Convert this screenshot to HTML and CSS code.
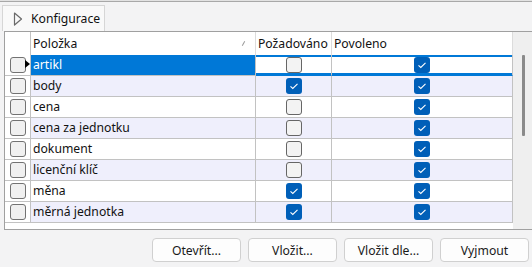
FILE: index.html
```html
<!DOCTYPE html>
<html lang="cs">
    <head>
        <meta charset="UTF-8">
        <title>Konfigurace</title>
        <link rel="stylesheet" href="styles.css">
    </head>
    <body>
        <div class="topline"></div>
        <div class="tabs">
            <div class="tab">
                <svg class="tab-icon" width="10" height="14" viewBox="0 0 10 14">
                    <polygon points="1.5,1 8.5,7 1.5,13" fill="none" stroke="#6a6a6a" stroke-width="1.2" stroke-linejoin="round"/>
                </svg>
                <span>Konfigurace</span>
            </div>
        </div>

        <div class="grid">
            <div class="table">
                <div class="row head">
                    <div class="cell rh"></div>
                    <div class="cell text">Položka <span class="sort"></span></div>
                    <div class="cell text">Požadováno</div>
                    <div class="cell text">Povoleno</div>
                </div>

                <div class="row selected">
                    <div class="cell rh"><span class="rbtn"></span><span class="arrow"></span></div>
                    <div class="cell text">artikl</div>
                    <div class="cell chk"><span class="box"></span></div>
                    <div class="cell chk"><span class="box on"></span></div>
                </div>
                <div class="row alt">
                    <div class="cell rh"><span class="rbtn"></span></div>
                    <div class="cell text">body</div>
                    <div class="cell chk"><span class="box on"></span></div>
                    <div class="cell chk"><span class="box on"></span></div>
                </div>
                <div class="row">
                    <div class="cell rh"><span class="rbtn"></span></div>
                    <div class="cell text">cena</div>
                    <div class="cell chk"><span class="box"></span></div>
                    <div class="cell chk"><span class="box on"></span></div>
                </div>
                <div class="row alt">
                    <div class="cell rh"><span class="rbtn"></span></div>
                    <div class="cell text">cena za jednotku</div>
                    <div class="cell chk"><span class="box"></span></div>
                    <div class="cell chk"><span class="box on"></span></div>
                </div>
                <div class="row">
                    <div class="cell rh"><span class="rbtn"></span></div>
                    <div class="cell text">dokument</div>
                    <div class="cell chk"><span class="box"></span></div>
                    <div class="cell chk"><span class="box on"></span></div>
                </div>
                <div class="row alt">
                    <div class="cell rh"><span class="rbtn"></span></div>
                    <div class="cell text">licenční klíč</div>
                    <div class="cell chk"><span class="box"></span></div>
                    <div class="cell chk"><span class="box on"></span></div>
                </div>
                <div class="row">
                    <div class="cell rh"><span class="rbtn"></span></div>
                    <div class="cell text">měna</div>
                    <div class="cell chk"><span class="box on"></span></div>
                    <div class="cell chk"><span class="box on"></span></div>
                </div>
                <div class="row alt">
                    <div class="cell rh"><span class="rbtn"></span></div>
                    <div class="cell text">měrná jednotka</div>
                    <div class="cell chk"><span class="box on"></span></div>
                    <div class="cell chk"><span class="box on"></span></div>
                </div>
            </div>
            <div class="vscroll"><div class="thumb"></div></div>
        </div>

        <div class="buttons">
            <button>Otevřít...</button>
            <button>Vložit...</button>
            <button>Vložit dle...</button>
            <button>Vyjmout</button>
        </div>
    </body>
</html>
```

FILE: styles.css
```css
* {
    margin: 0;
    padding: 0;
    box-sizing: border-box;
}

body {
    width: 532px;
    height: 267px;
    overflow: hidden;
    background: #f3f3f4;
    color: #111;
    font-family: 'Noto Sans', 'Open Sans', sans-serif;
    font-size: 12.2px;
}

.topline {
    height: 2px;
    background: #e2e2e2;
    border-bottom: 1px solid #a8a8a8;
}

.tabs {
    height: 29px;
    padding: 3px 0 0 2px;
}

.tab {
    display: flex;
    align-items: center;
    gap: 8px;
    width: 103px;
    height: 26px;
    padding-left: 10px;
    background: #f9f9f9;
    border: 1px solid #d6d6d6;
    border-bottom: none;
}

.tab-icon {
    margin-top: 1px;
}

/* grid */
.grid {
    display: flex;
    margin-left: 4px;
    height: 199px;
    border-top: 1px solid #a0a0a0;
    border-left: 1px solid #a0a0a0;
    border-bottom: 1px solid #a0a0a0;
    margin-right: -4px;
}

.table {
    width: 508px;
    background: white;
}

.row {
    display: grid;
    grid-template-columns: 26px 225px 76px 181px;
    height: 21px;
    line-height: 20px;
}

.cell {
    position: relative;
    border-right: 1px solid #c2c2c2;
    border-bottom: 1px solid #c2c2c2;
}

.row.head {
    height: 23px;
    line-height: 23px;
}

.row.head .cell {
    border-bottom: none;
    border-right-color: #dcdcdc;
}

.row.head .cell.rh {
    border-right-color: #c2c2c2;
}

.text {
    padding-left: 2px;
    white-space: nowrap;
    overflow: hidden;
}

.sort {
    position: absolute;
    right: 11px;
    top: 9px;
    width: 1px;
    height: 5px;
    background: #9a9a9a;
    transform: rotate(30deg);
}

.row.alt .text,
.row.alt .chk {
    background: #efeffc;
}

.rh {
    display: flex;
    align-items: center;
    padding-left: 5px;
}

.rbtn {
    width: 16px;
    height: 16px;
    background: #f0f0f0;
    border: 1px solid #727272;
    border-radius: 3px;
}

.arrow {
    position: absolute;
    right: 0;
    top: 5px;
    border-left: 5px solid #000;
    border-top: 4.5px solid transparent;
    border-bottom: 4.5px solid transparent;
}

.chk {
    display: flex;
    align-items: center;
    justify-content: center;
}

.box {
    width: 16px;
    height: 16px;
    background: #f3f3f3;
    border: 1px solid #666;
    border-radius: 3px;
}

.box.on {
    border: none;
    background: #005fb8 url("data:image/svg+xml;utf8,<svg xmlns='http://www.w3.org/2000/svg' width='16' height='16'><path d='M4.5 8.3 L6.8 10.4 L11.5 5.8' fill='none' stroke='white' stroke-width='1.1'/></svg>") no-repeat center;
}

.row.selected .text {
    background: #0078d7;
    color: white;
}

.row.selected .chk {
    border-bottom-color: #0078d7;
    box-shadow: inset 0 2px #0078d7, inset 0 -2px #0078d7;
}

.vscroll {
    position: relative;
    width: 19px;
    background: #efefef;
}

.thumb {
    position: absolute;
    left: 9px;
    top: 23px;
    width: 3px;
    height: 81px;
    background: #8a8a8a;
    border-radius: 1px;
}

/* bottom buttons */
.buttons {
    display: flex;
    justify-content: flex-end;
    gap: 7px;
    padding: 8px 3px 0 0;
}

button {
    width: 89px;
    height: 24px;
    background: #fdfdfd;
    border: 1px solid #d0d0d0;
    border-radius: 4px;
    font-family: 'Noto Sans', 'Open Sans', sans-serif;
    font-size: 12.2px;
    color: #1a1a1a;
}
```
